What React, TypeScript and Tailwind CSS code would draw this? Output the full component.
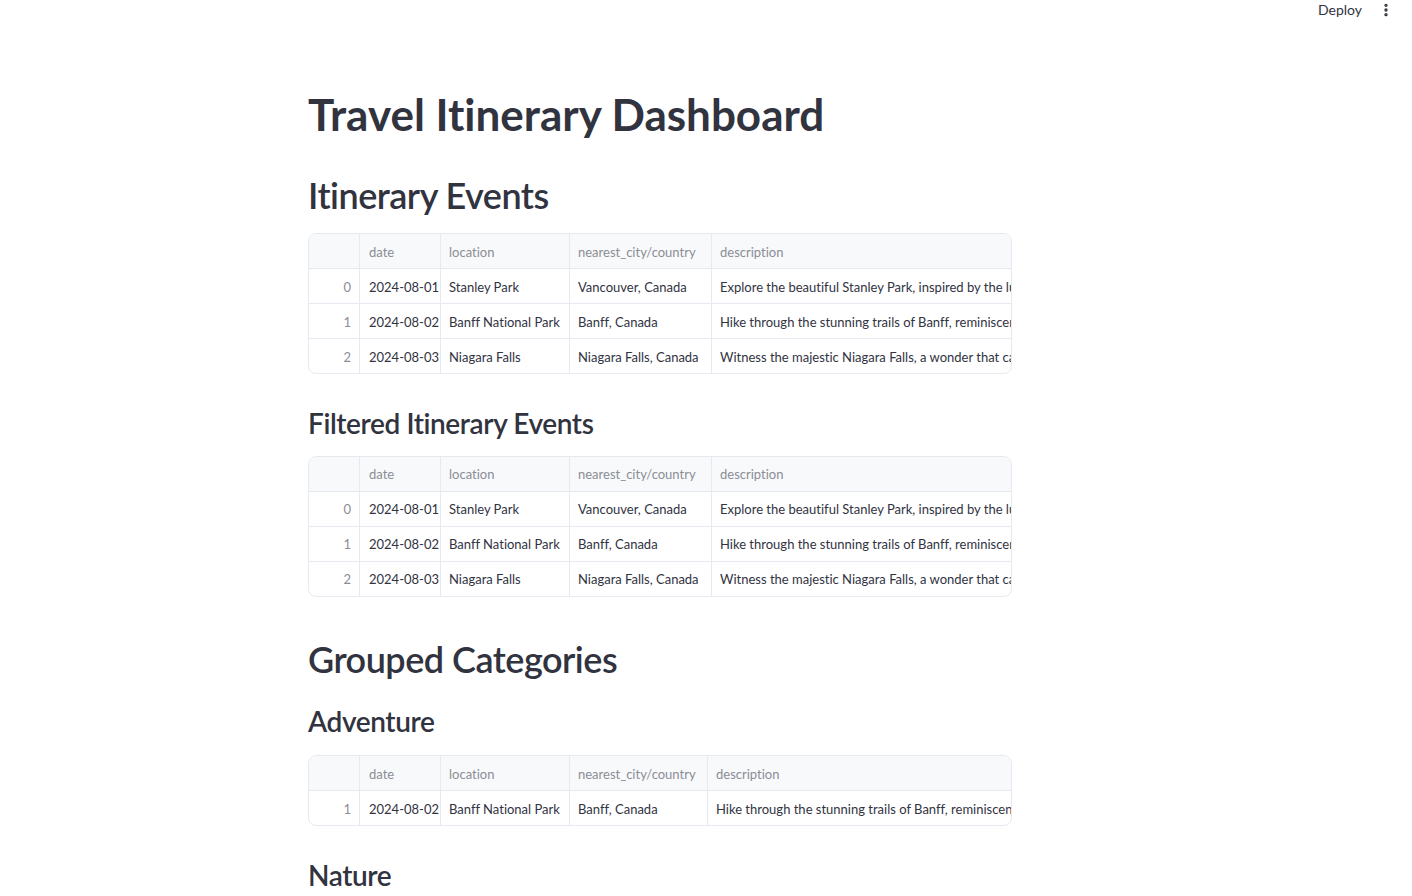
import { EllipsisVertical } from "lucide-react";

type Row = {
  idx: number;
  date: string;
  location: string;
  city: string;
  description: string;
};

const events: Row[] = [
  {
    idx: 0,
    date: "2024-08-01",
    location: "Stanley Park",
    city: "Vancouver, Canada",
    description: "Explore the beautiful Stanley Park, inspired by the lush greenery of the Pacific Northwest."
  },
  {
    idx: 1,
    date: "2024-08-02",
    location: "Banff National Park",
    city: "Banff, Canada",
    description: "Hike through the stunning trails of Banff, reminiscent of alpine adventures."
  },
  {
    idx: 2,
    date: "2024-08-03",
    location: "Niagara Falls",
    city: "Niagara Falls, Canada",
    description: "Witness the majestic Niagara Falls, a wonder that captivates every traveler."
  }
];

const font = { fontFamily: "Lato, 'Liberation Sans', sans-serif" };

function DataFrame({ rows, cols }: { rows: Row[]; cols: string }) {
  const cell = "flex h-[34px] items-center whitespace-nowrap border-r border-[#e6e9ef] px-2 pt-[3px]";
  const last = "flex h-[34px] items-center overflow-hidden whitespace-nowrap px-2 pt-[3px]";
  return (
    <div className="w-[704px] overflow-hidden rounded-lg border border-[#e6e9ef] text-[13px]">
      <div className={`grid ${cols} border-b border-[#e6e9ef] bg-[#f8f9fb] text-[#8b8d95]`}>
        <div className={cell}></div>
        <div className={`${cell} pl-[9px]`}>date</div>
        <div className={cell}>location</div>
        <div className={cell}>nearest_city/country</div>
        <div className={last}>description</div>
      </div>
      {rows.map((r, i) => (
        <div
          key={r.idx}
          className={`grid ${cols} text-[#31333f] ${i < rows.length - 1 ? "border-b border-[#e6e9ef]" : ""}`}
        >
          <div className={`${cell} justify-end text-[#8b8d95]`}>{r.idx}</div>
          <div className={`${cell} pl-[9px]`}>{r.date}</div>
          <div className={cell}>{r.location}</div>
          <div className={cell}>{r.city}</div>
          <div className={last}>{r.description}</div>
        </div>
      ))}
    </div>
  );
}

export default function App() {
  const colsA = "grid-cols-[51px_81px_129px_142px_1fr]";
  const colsB = "grid-cols-[51px_81px_129px_138px_1fr]";
  return (
    <div className="min-h-screen bg-white text-[#31333f] [font-variant-ligatures:none]" style={font}>
      <header className="flex h-[20px] items-center justify-end gap-4 pr-[18px]">
        <button type="button" className="text-sm text-[#31333f]">
          Deploy
        </button>
        <EllipsisVertical className="h-4 w-4 text-[#31333f]" strokeWidth={3} />
      </header>

      <main className="ml-[308px] w-[704px] pt-[68px]">
        <h1 className="text-[44px] font-bold leading-[1.2]">Travel Itinerary Dashboard</h1>

        <h2 className="mt-[33px] text-[36px] font-semibold leading-[1.2] tracking-[-0.5px]">Itinerary Events</h2>
        <div className="mt-[16px]">
          <DataFrame rows={events} cols={colsA} />
        </div>

        <h3 className="mt-[33px] text-[28px] font-semibold leading-[1.2] tracking-[-0.4px]">
          Filtered Itinerary Events
        </h3>
        <div className="mt-[15px]">
          <DataFrame rows={events} cols={colsA} />
        </div>

        <h2 className="mt-[41px] text-[36px] font-semibold leading-[1.2] tracking-[-0.5px]">Grouped Categories</h2>
        <h3 className="mt-[24px] text-[28px] font-semibold leading-[1.2] tracking-[-0.4px]">Adventure</h3>
        <div className="mt-[17px]">
          <DataFrame rows={[events[1]]} cols={colsB} />
        </div>

        <h3 className="mt-[33px] text-[28px] font-semibold leading-[1.2] tracking-[-0.4px]">Nature</h3>
      </main>
    </div>
  );
}
